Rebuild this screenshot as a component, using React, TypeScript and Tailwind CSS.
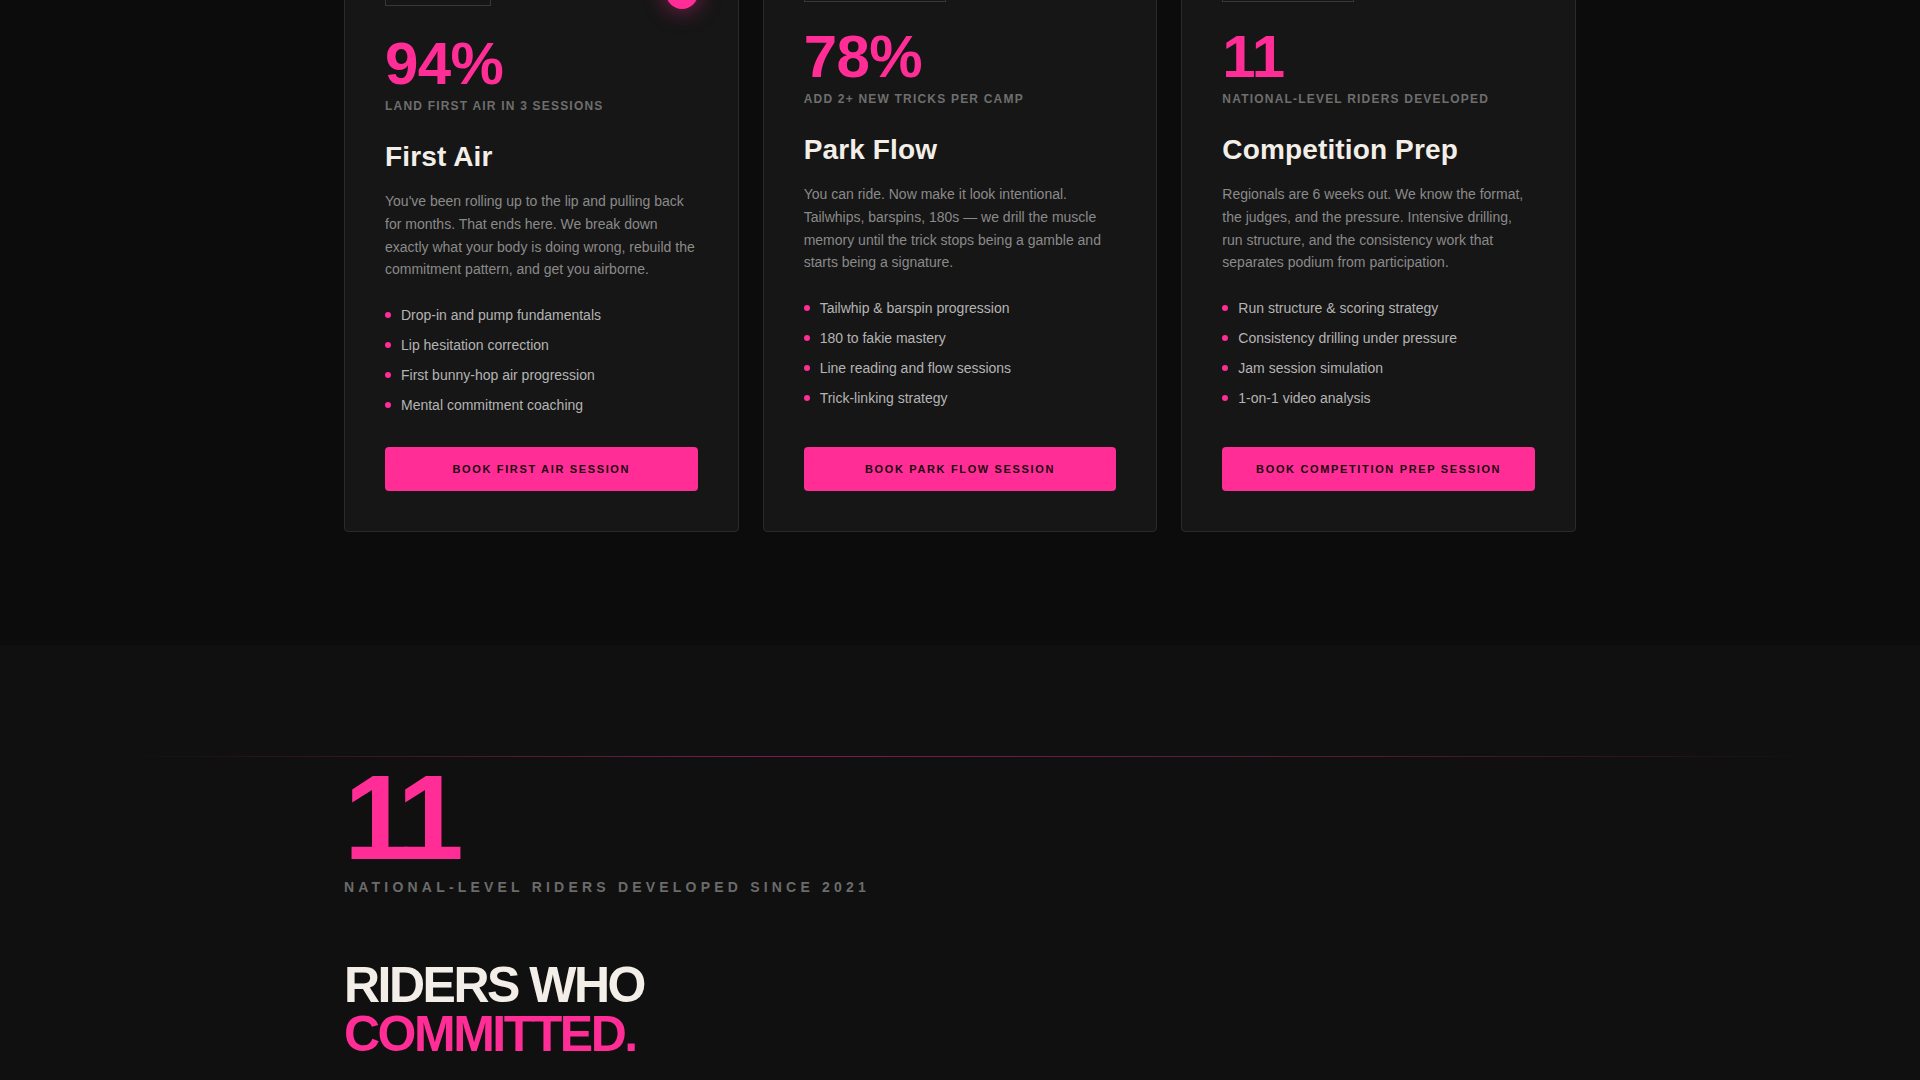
import React from "react";

type Program = {
  tag: string;
  tagWidth: string;
  stat: string;
  statLabel: string;
  title: string;
  body: string;
  points: string[];
  cta: string;
  live?: boolean;
};

const programs: Program[] = [
  {
    tag: "LEVEL 01",
    tagWidth: "w-[106px]",
    stat: "94%",
    statLabel: "Land first air in 3 sessions",
    title: "First Air",
    body: "You've been rolling up to the lip and pulling back for months. That ends here. We break down exactly what your body is doing wrong, rebuild the commitment pattern, and get you airborne.",
    points: [
      "Drop-in and pump fundamentals",
      "Lip hesitation correction",
      "First bunny-hop air progression",
      "Mental commitment coaching",
    ],
    cta: "Book First Air Session",
    live: true,
  },
  {
    tag: "LEVEL 02",
    tagWidth: "w-[142px]",
    stat: "78%",
    statLabel: "Add 2+ new tricks per camp",
    title: "Park Flow",
    body: "You can ride. Now make it look intentional. Tailwhips, barspins, 180s — we drill the muscle memory until the trick stops being a gamble and starts being a signature.",
    points: [
      "Tailwhip & barspin progression",
      "180 to fakie mastery",
      "Line reading and flow sessions",
      "Trick-linking strategy",
    ],
    cta: "Book Park Flow Session",
  },
  {
    tag: "LEVEL 03",
    tagWidth: "w-[132px]",
    stat: "11",
    statLabel: "National-level riders developed",
    title: "Competition Prep",
    body: "Regionals are 6 weeks out. We know the format, the judges, and the pressure. Intensive drilling, run structure, and the consistency work that separates podium from participation.",
    points: [
      "Run structure & scoring strategy",
      "Consistency drilling under pressure",
      "Jam session simulation",
      "1-on-1 video analysis",
    ],
    cta: "Book Competition Prep Session",
  },
];

function ProgramCard({ p }: { p: Program }) {
  return (
    <div className="flex flex-col rounded border border-[#2a2a2a] bg-[#161616] p-10">
      <div className="flex items-center justify-between">
        <span
          className={`${p.tagWidth} block h-[25px] border border-[#383838] px-3 text-[10px] font-bold leading-[23px] tracking-[0.2em] text-[#8a8a8a]`}
        >
          {p.tag}
        </span>
        {p.live && (
          <span className="block h-8 w-8 rounded-full bg-[#ff2d95] shadow-[0_0_22px_rgba(255,45,149,0.55)]" />
        )}
      </div>
      <div className="mt-[25px] text-[60px] font-bold leading-none tracking-[-0.01em] text-[#ff2d95]">
        {p.stat}
      </div>
      <div className="mt-1 text-[12px] font-bold uppercase leading-4 tracking-[0.1em] text-[#6e6e6e]">
        {p.statLabel}
      </div>
      <h3 className="mt-[25px] text-[28px] font-bold leading-[35px] tracking-[0.005em] text-[#f3efe8]">
        {p.title}
      </h3>
      <p className="mt-4 text-[14px] leading-[22.75px] text-[#8a8a8a]">{p.body}</p>
      <ul className="mt-6 flex flex-col gap-2.5">
        {p.points.map((pt) => (
          <li key={pt} className="flex items-center gap-2.5 text-[14px] leading-5 text-[#b4b4b4]">
            <span className="block h-1.5 w-1.5 shrink-0 rounded-full bg-[#ff2d95]" />
            {pt}
          </li>
        ))}
      </ul>
      <div className="mt-auto pt-8">
        <button className="flex h-11 w-full items-center justify-center rounded bg-[#ff2d95] text-[11px] font-bold uppercase tracking-[0.15em] text-[#1c0812]">
          {p.cta}
        </button>
      </div>
    </div>
  );
}

export default function App() {
  return (
    <div className="flex h-[1080px] flex-col overflow-hidden bg-[#0c0c0c] font-['Liberation_Sans',Arial,sans-serif]">
      <section className="pb-[113px]">
        <div className="mx-auto -mt-16 grid max-w-[1232px] grid-cols-3 gap-6">
          {programs.map((p) => (
            <ProgramCard key={p.title} p={p} />
          ))}
        </div>
      </section>

      <section className="flex-1 bg-[#101010] pt-[111px]">
        <div className="h-px w-full bg-[linear-gradient(90deg,transparent_6%,rgba(255,45,149,0.45)_40%,rgba(255,45,149,0.3)_70%,transparent_95%)]" />
        <div className="mx-auto max-w-[1232px]">
          <div className="text-[120px] font-bold leading-none tracking-[-0.06em] text-[#ff2d95]">11</div>
          <div className="text-[14px] font-bold leading-5 tracking-[0.3em] text-[#6b6b6b]">
            NATIONAL-LEVEL RIDERS DEVELOPED SINCE 2021
          </div>
          <h2 className="mt-16 text-[50px] font-bold leading-[49px] tracking-[-0.05em] text-[#f3efe8]">
            RIDERS WHO
            <br />
            <span className="text-[#ff2d95]">COMMITTED.</span>
          </h2>
        </div>
      </section>
    </div>
  );
}
